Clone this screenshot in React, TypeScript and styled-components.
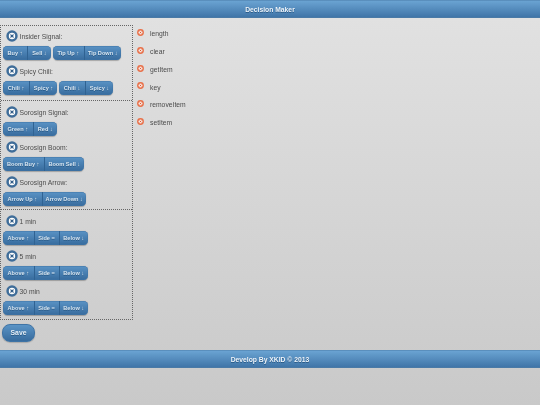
import React from "react";
import styled, { createGlobalStyle } from "styled-components";

const Global = createGlobalStyle`
  html, body { margin: 0; padding: 0; height: 405px; overflow: hidden; }
  body { font-family: "Liberation Sans", Arial, sans-serif; }
`;
const Page = styled.div`
  width: 540px; height: 405px; display: flex; flex-direction: column;
  background: linear-gradient(#e2e2e2, #c9c9c9);
  filter: blur(0.3px);
`;
const Bar = styled.div`
  flex: none; height: 18px; box-sizing: border-box;
  display: flex; align-items: center; justify-content: center;
  background: linear-gradient(#6aa3d2, #4075a8);
  border-top: 1px solid #5a8fbd; border-bottom: 1px solid #4a7aa6;
  color: #eef4fa; font-weight: bold; font-size: 6.75px;
  text-shadow: 0 0.5px 0.5px #2a5a86;
`;
const Body = styled.div`
  flex: none; height: 332px; box-sizing: border-box; padding: 7px 0 0 0;
  display: flex;
`;
const Left = styled.div`
  width: 133px; flex: none; display: flex; flex-direction: column;
`;
const Panel = styled.div`
  box-sizing: border-box; width: 133px; height: 294.5px;
  border: 1px dotted #666;
  display: flex; flex-direction: column;
`;
const Section = styled.section<{ $h: number; $divided?: boolean }>`
  height: ${p => p.$h}px; box-sizing: border-box; flex: none;
  display: flex; flex-direction: column; padding-left: 2px;
  ${p => p.$divided ? "border-top: 1px dotted #666; padding-top: 1px;" : ""}
`;
const Label = styled.div`
  height: 20px; flex: none; display: flex; align-items: center; gap: 1.5px;
  padding-left: 3px; color: #4c4c4c; font-size: 6.75px;
`;
const BtnRow = styled.div`
  height: 15px; flex: none; display: flex; gap: 2px;
`;
const Group = styled.div`
  display: flex; height: 14px; margin-top: 0.4px; border-radius: 4.5px; overflow: hidden;
  background: linear-gradient(#5a93c5, #376b9d);
  box-shadow: inset 0 0 0 0.5px #3f74a6, 0 0.5px 1px rgba(0,0,0,.25);
`;
const Btn = styled.div<{ $w: number }>`
  width: ${p => p.$w}px; box-sizing: border-box; flex: none;
  display: flex; align-items: center; justify-content: center;
  color: #d8e5f0; font-size: 5.6px; font-weight: bold; white-space: nowrap;
  text-shadow: 0 0.5px 0.5px #2a5a86;
  & + & { border-left: 1px solid #2f6292; }
`;
const Save = styled.button`
  width: 33px; height: 18px; margin: 4px 0 0 2px; padding: 0;
  border: 1px solid #3f74a6; border-radius: 8px;
  background: linear-gradient(#5a93c5, #376b9d);
  color: #e6eff7; font: bold 6.8px "Liberation Sans", Arial, sans-serif;
  text-shadow: 0 0.5px 0.5px #2a5a86;
  box-shadow: 0 0.5px 1px rgba(0,0,0,.3);
`;
const List = styled.ul`
  list-style: none; margin: 0; padding: 0 0 0 4px;
  display: flex; flex-direction: column;
`;
const Item = styled.li`
  height: 17.75px; display: flex; align-items: center; gap: 6px;
  color: #4c4c4c; font-size: 6.75px;
`;

const DeleteIcon = () => (
  <svg width="12" height="12" viewBox="0 0 12 12" style={{ flex: "none" }}>
    <circle cx="6" cy="6" r="5.7" fill="#3f6d99" />
    <circle cx="6" cy="6" r="3.2" fill="#fff" />
    <path d="M4.8 4.8l2.4 2.4M7.2 4.8l-2.4 2.4" stroke="#2d5a86" strokeWidth="1.2" strokeLinecap="round" />
  </svg>
);
const OrangeIcon = () => (
  <svg width="7" height="7" viewBox="0 0 7 7" style={{ flex: "none", marginTop: "-2.5px" }}>
    <circle cx="3.5" cy="3.5" r="3.4" fill="#e86f48" />
    <circle cx="3.5" cy="3.5" r="2" fill="#f8e6df" />
    <path d="M2.7 2.7l1.6 1.6M4.3 2.7l-1.6 1.6" stroke="#dc5a34" strokeWidth=".9" />
  </svg>
);

type B = [string, number];
const Row = ({ label, groups }: { label: string; groups: B[][] }) => (
  <>
    <Label><DeleteIcon />{label}</Label>
    <BtnRow>
      {groups.map((g, i) => (
        <Group key={i}>{g.map(([t, w]) => <Btn key={t} $w={w}>{t}</Btn>)}</Group>
      ))}
    </BtnRow>
  </>
);

const minute: B[][] = [[["Above ↑", 30.5], ["Side =", 25], ["Below ↓", 29.5]]];

export default function App() {
  return (
    <Page>
      <Global />
      <Bar>Decision Maker</Bar>
      <Body>
        <Left>
          <Panel>
            <Section $h={74}>
              <Row label="Insider Signal:" groups={[[["Buy ↑", 24], ["Sell ↓", 24]], [["Tip Up ↑", 30.5], ["Tip Down ↓", 37.5]]]} />
              <Row label="Spicy Chili:" groups={[[["Chili ↑", 26], ["Spicy ↑", 28]], [["Chili ↓", 26], ["Spicy ↓", 28]]]} />
            </Section>
            <Section $h={109} $divided>
              <Row label="Sorosign Signal:" groups={[[["Green ↑", 29.5], ["Red ↓", 24.5]]]} />
              <Row label="Sorosign Boom:" groups={[[["Boom Buy ↑", 40.5], ["Boom Sell ↓", 40.5]]]} />
              <Row label="Sorosign Arrow:" groups={[[["Arrow Up ↑", 38.5], ["Arrow Down ↓", 44.5]]]} />
            </Section>
            <Section $h={109.5} $divided>
              <Row label="1 min" groups={minute} />
              <Row label="5 min" groups={minute} />
              <Row label="30 min" groups={minute} />
            </Section>
          </Panel>
          <Save>Save</Save>
        </Left>
        <List>
          {["length", "clear", "getItem", "key", "removeItem", "setItem"].map(t => (
            <Item key={t}><OrangeIcon />{t}</Item>
          ))}
        </List>
      </Body>
      <Bar>Develop By XKID © 2013</Bar>
    </Page>
  );
}
